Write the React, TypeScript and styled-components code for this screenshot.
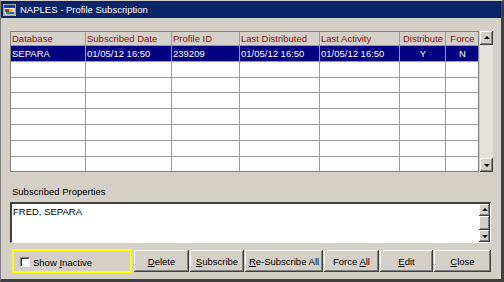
import React from "react";
import styled, { createGlobalStyle } from "styled-components";

const rows = [
  {
    database: "SEPARA",
    subscribed: "01/05/12 16:50",
    profileId: "239209",
    lastDistributed: "01/05/12 16:50",
    lastActivity: "01/05/12 16:50",
    distribute: "Y",
    force: "N",
  },
];

const columns = [
  { title: "Database", key: "database", center: false },
  { title: "Subscribed Date", key: "subscribed", center: false },
  { title: "Profile ID", key: "profileId", center: false },
  { title: "Last Distributed", key: "lastDistributed", center: false },
  { title: "Last Activity", key: "lastActivity", center: false },
  { title: "Distribute", key: "distribute", center: true },
  { title: "Force", key: "force", center: true },
] as const;

const EMPTY_ROWS = 8;

export default function App() {
  const filled = [...rows];
  while (filled.length < EMPTY_ROWS) filled.push(null as never);

  return (
    <>
      <GlobalStyle />
      <Window>
        <TitleBar>
          <AppIcon />
          <TitleText>NAPLES - Profile Subscription</TitleText>
        </TitleBar>
        <Body>
          <TableRow>
            <Grid>
              {columns.map((c) => (
                <HeaderCell key={c.key} $center={c.center}>
                  {c.title}
                </HeaderCell>
              ))}
              {filled.map((r, i) =>
                columns.map((c) => (
                  <Cell key={`${i}-${c.key}`} $selected={i === 0} $center={c.center}>
                    {r ? r[c.key] : ""}
                  </Cell>
                ))
              )}
            </Grid>
            <ScrollBar $width={13}>
              <ArrowButton $size={13}>
                <Arrow $up />
              </ArrowButton>
              <Track />
              <ArrowButton $size={13}>
                <Arrow />
              </ArrowButton>
            </ScrollBar>
          </TableRow>

          <Label>Subscribed Properties</Label>
          <TextBox>
            <TextContent>FRED, SEPARA</TextContent>
            <ScrollBar $width={11}>
              <ArrowButton $size={11}>
                <Arrow $up />
              </ArrowButton>
              <Thumb />
              <ArrowButton $size={11}>
                <Arrow />
              </ArrowButton>
            </ScrollBar>
          </TextBox>

          <Footer>
            <Highlight>
              <CheckBox />
              <span>
                Show <u>I</u>nactive
              </span>
            </Highlight>
            <Buttons>
              <Button $w={55}>
                <span>
                  <u>D</u>elete
                </span>
              </Button>
              <Button $w={54}>
                <span>
                  <u>S</u>ubscribe
                </span>
              </Button>
              <Button $w={78}>
                <span>
                  <u>R</u>e-Subscribe All
                </span>
              </Button>
              <Button $w={55}>
                <span>
                  Force <u>A</u>ll
                </span>
              </Button>
              <Button $w={53}>
                <span>
                  <u>E</u>dit
                </span>
              </Button>
              <Button $w={57}>
                <span>
                  <u>C</u>lose
                </span>
              </Button>
            </Buttons>
          </Footer>
        </Body>
      </Window>
    </>
  );
}

function AppIcon() {
  return (
    <svg width="13" height="12" viewBox="0 0 13 12">
      <rect x="0" y="0" width="13" height="12" fill="#d4d0c8" />
      <rect x="1" y="1" width="11" height="10" fill="#ffffff" stroke="#404040" strokeWidth="0.6" />
      <rect x="1" y="1" width="11" height="3" fill="#1a3fa8" />
      <rect x="2" y="5" width="4" height="3" fill="#d02020" />
      <rect x="6" y="5" width="4" height="3" fill="#f0c000" />
      <rect x="3" y="8" width="4" height="2" fill="#20a040" />
      <rect x="7" y="8" width="4" height="2" fill="#2060d0" />
    </svg>
  );
}

const GlobalStyle = createGlobalStyle`
  html, body {
    margin: 0;
    padding: 0;
    background: #d4d0c8;
  }
  body {
    font-family: "Liberation Sans", Arial, sans-serif;
    font-size: 9.5px;
    color: #000;
  }
`;

const Window = styled.div`
  width: 504px;
  height: 282px;
  box-sizing: border-box;
  background: #d4d0c8;
  border-left: 1px solid #808080;
  border-top: 1px solid #d4d0c8;
  border-right: 3px solid #404040;
  border-bottom: 3px solid #404040;
  display: flex;
  flex-direction: column;
`;

const TitleBar = styled.div`
  height: 17px;
  background: #0a246a;
  display: flex;
  align-items: center;
  gap: 4px;
  padding-left: 2px;
`;

const TitleText = styled.span`
  color: #fff;
  font-size: 9.5px;
`;

const Body = styled.div`
  padding: 13px 9px 0 9px;
  display: flex;
  flex-direction: column;
`;

const TableRow = styled.div`
  display: flex;
  gap: 1px;
`;

const Grid = styled.div`
  display: grid;
  grid-template-columns: 74px 85px 67px 79px 79px 45px 32px;
  grid-template-rows: 13px 15px 15px 14px 15px 15px 15px 15px 14px;
  gap: 1px;
  background: #9a9a9a;
  border: 1px solid #808080;
`;

const HeaderCell = styled.div<{ $center: boolean }>`
  background: #d4d0c8;
  color: #8f1111;
  font-size: 9.5px;
  line-height: 13px;
  padding-left: 1px;
  text-align: ${({ $center }) => ($center ? "center" : "left")};
  white-space: nowrap;
  overflow: hidden;
`;

const Cell = styled.div<{ $selected: boolean; $center: boolean }>`
  background: ${({ $selected }) => ($selected ? "#000080" : "#ffffff")};
  color: ${({ $selected }) => ($selected ? "#ffffff" : "#000000")};
  line-height: 15px;
  padding-left: 1px;
  text-align: ${({ $center }) => ($center ? "center" : "left")};
  white-space: nowrap;
  overflow: hidden;
`;

const ScrollBar = styled.div<{ $width: number }>`
  width: ${({ $width }) => $width}px;
  display: flex;
  flex-direction: column;
  flex-shrink: 0;
`;

const raised = `
  background: #d4d0c8;
  box-shadow: inset -1px -1px #404040, inset 1px 1px #ffffff,
    inset -2px -2px #808080;
`;

const ArrowButton = styled.div<{ $size: number }>`
  height: ${({ $size }) => $size + 1}px;
  display: flex;
  align-items: center;
  justify-content: center;
  ${raised}
`;

const Arrow = styled.div<{ $up?: boolean }>`
  width: 0;
  height: 0;
  border-left: 3px solid transparent;
  border-right: 3px solid transparent;
  ${({ $up }) =>
    $up ? "border-bottom: 3px solid #000;" : "border-top: 3px solid #000;"}
  margin-top: ${({ $up }) => ($up ? "-1px" : "0")};
`;

const Track = styled.div`
  flex: 1;
  background: #e4e1dc;
`;

const Thumb = styled.div`
  flex: 1;
  ${raised}
`;

const Label = styled.div`
  margin-top: 14px;
  padding-left: 2px;
  line-height: 12px;
`;

const TextBox = styled.div`
  margin-top: 4px;
  height: 41px;
  width: 481px;
  box-sizing: border-box;
  background: #fff;
  border-top: 2px solid #404040;
  border-left: 2px solid #404040;
  border-right: 1px solid #ffffff;
  border-bottom: 1px solid #ffffff;
  display: flex;
`;

const TextContent = styled.div`
  flex: 1;
  padding: 2px 1px;
  line-height: 12px;
`;

const Footer = styled.div`
  margin-top: 6px;
  display: flex;
  align-items: center;
  gap: 2px;
  padding-left: 2px;
`;

const Highlight = styled.div`
  width: 120px;
  height: 24px;
  box-sizing: border-box;
  border: 2px solid #ffff00;
  display: flex;
  align-items: center;
  gap: 3px;
  padding-left: 6px;
  padding-top: 2px;
`;

const CheckBox = styled.div`
  width: 10px;
  height: 10px;
  box-sizing: border-box;
  background: #fff;
  border-top: 1px solid #808080;
  border-left: 1px solid #808080;
  border-right: 1px solid #ffffff;
  border-bottom: 1px solid #ffffff;
  box-shadow: inset 1px 1px #404040;
`;

const Buttons = styled.div`
  display: flex;
  gap: 1px;
`;

const Button = styled.div<{ $w: number }>`
  width: ${({ $w }) => $w}px;
  height: 22px;
  display: flex;
  align-items: center;
  justify-content: center;
  white-space: nowrap;
  ${raised}
`;
